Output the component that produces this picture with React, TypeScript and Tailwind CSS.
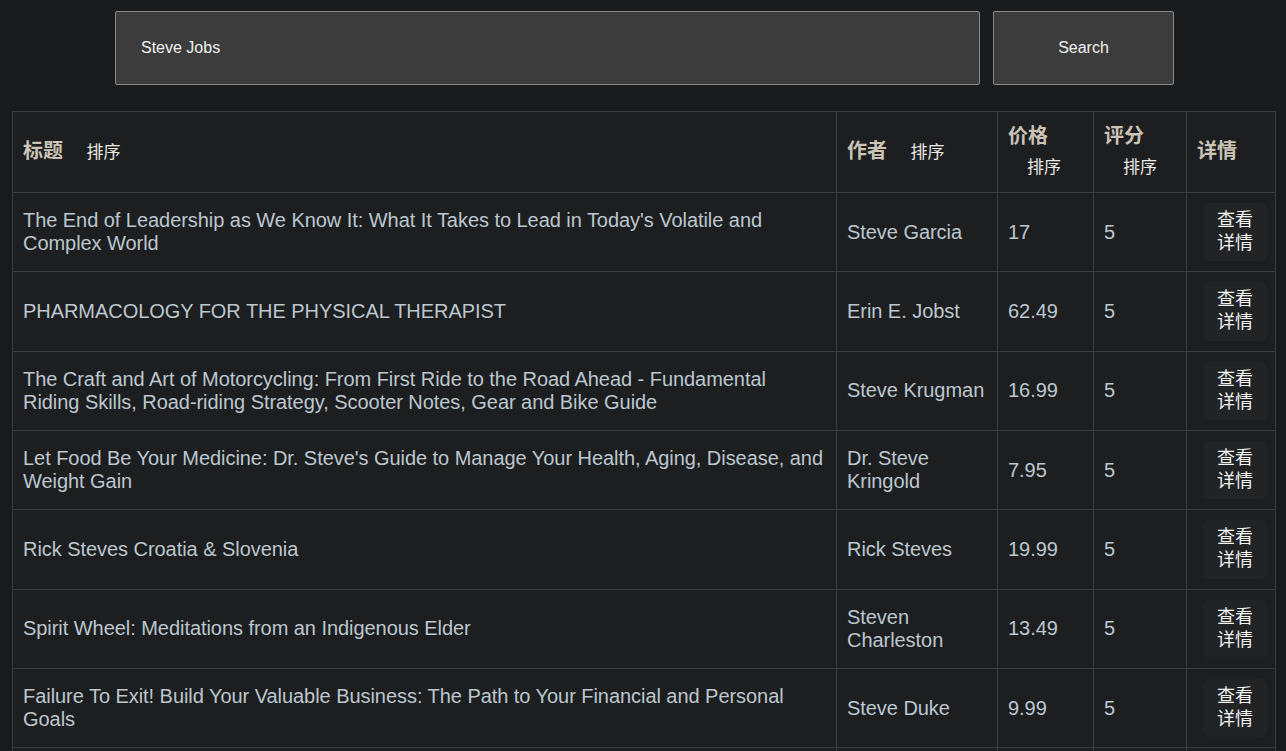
const books = [
  {
    title:
      "The End of Leadership as We Know It: What It Takes to Lead in Today's Volatile and Complex World",
    author: "Steve Garcia",
    price: "17",
    rating: "5",
  },
  {
    title: "PHARMACOLOGY FOR THE PHYSICAL THERAPIST",
    author: "Erin E. Jobst",
    price: "62.49",
    rating: "5",
  },
  {
    title:
      "The Craft and Art of Motorcycling: From First Ride to the Road Ahead - Fundamental Riding Skills, Road-riding Strategy, Scooter Notes, Gear and Bike Guide",
    author: "Steve Krugman",
    price: "16.99",
    rating: "5",
  },
  {
    title:
      "Let Food Be Your Medicine: Dr. Steve's Guide to Manage Your Health, Aging, Disease, and Weight Gain",
    author: "Dr. Steve Kringold",
    price: "7.95",
    rating: "5",
  },
  {
    title: "Rick Steves Croatia & Slovenia",
    author: "Rick Steves",
    price: "19.99",
    rating: "5",
  },
  {
    title: "Spirit Wheel: Meditations from an Indigenous Elder",
    author: "Steven Charleston",
    price: "13.49",
    rating: "5",
  },
  {
    title:
      "Failure To Exit! Build Your Valuable Business: The Path to Your Financial and Personal Goals",
    author: "Steve Duke",
    price: "9.99",
    rating: "5",
  },
  {
    title: "Steve Jobs",
    author: "Walter Isaacson",
    price: "14.99",
    rating: "5",
  },
];

const font = "font-['Liberation_Sans','Noto_Sans_CJK_SC',sans-serif]";

function HeaderCell({ label, sortable = true }: { label: string; sortable?: boolean }) {
  return (
    <th className="border border-[#3b3f42] px-2.5 py-[9px] text-left align-middle font-normal leading-[30px]">
      <span className="text-[20px] font-bold text-[#cbc3b6]">{label}</span>{" "}
      {sortable && (
        <button className="ml-[19px] text-[17px] leading-[30px] text-[#ebe9e6]">排序</button>
      )}
    </th>
  );
}

export default function App() {
  return (
    <div className={`min-h-screen bg-[#181a1b] ${font}`}>
      {/* Search bar */}
      <div className="flex justify-center gap-[13px] pt-[11px] pl-[3px]">
        <input
          defaultValue="Steve Jobs"
          className="h-[74px] w-[865px] rounded-[2px] border border-[#8a8a8a] bg-[#3c3c3c] pl-[25px] text-[16px] text-[#f0f0f0] outline-none"
        />
        <button className="h-[74px] w-[181px] rounded-[2px] border border-[#8a8a8a] bg-[#3c3c3c] text-[16px] text-[#f0f0f0]">
          Search
        </button>
      </div>

      {/* Results */}
      <div className="mx-3 mt-[26px]">
        <table className="w-[1263px] table-fixed border-collapse bg-[#1c1e1f]">
          <colgroup>
            <col className="w-[824px]" />
            <col className="w-[161px]" />
            <col className="w-[96px]" />
            <col className="w-[93px]" />
            <col className="w-[89px]" />
          </colgroup>
          <thead>
            <tr>
              <HeaderCell label="标题" />
              <HeaderCell label="作者" />
              <HeaderCell label="价格" />
              <HeaderCell label="评分" />
              <HeaderCell label="详情" sortable={false} />
            </tr>
          </thead>
          <tbody>
            {books.map((b) => (
              <tr
                key={b.title}
                className="text-[20px] leading-[23px] tracking-[-0.05px] text-[#bcc7cf]"
              >
                <td className="border border-[#3b3f42] px-2.5 py-2.5 align-middle">{b.title}</td>
                <td className="border border-[#3b3f42] px-2.5 py-2.5 align-middle">{b.author}</td>
                <td className="border border-[#3b3f42] px-2.5 py-2.5 align-middle">{b.price}</td>
                <td className="border border-[#3b3f42] px-2.5 py-2.5 align-middle">{b.rating}</td>
                <td className="border border-[#3b3f42] py-2.5 pl-4 pr-2 align-middle">
                  <button className="rounded-md bg-[#212325] px-[13px] py-[6px] text-[18px] leading-[23.15px] tracking-normal text-[#f2f2f2]">
                    查看详情
                  </button>
                </td>
              </tr>
            ))}
          </tbody>
        </table>
      </div>
    </div>
  );
}
